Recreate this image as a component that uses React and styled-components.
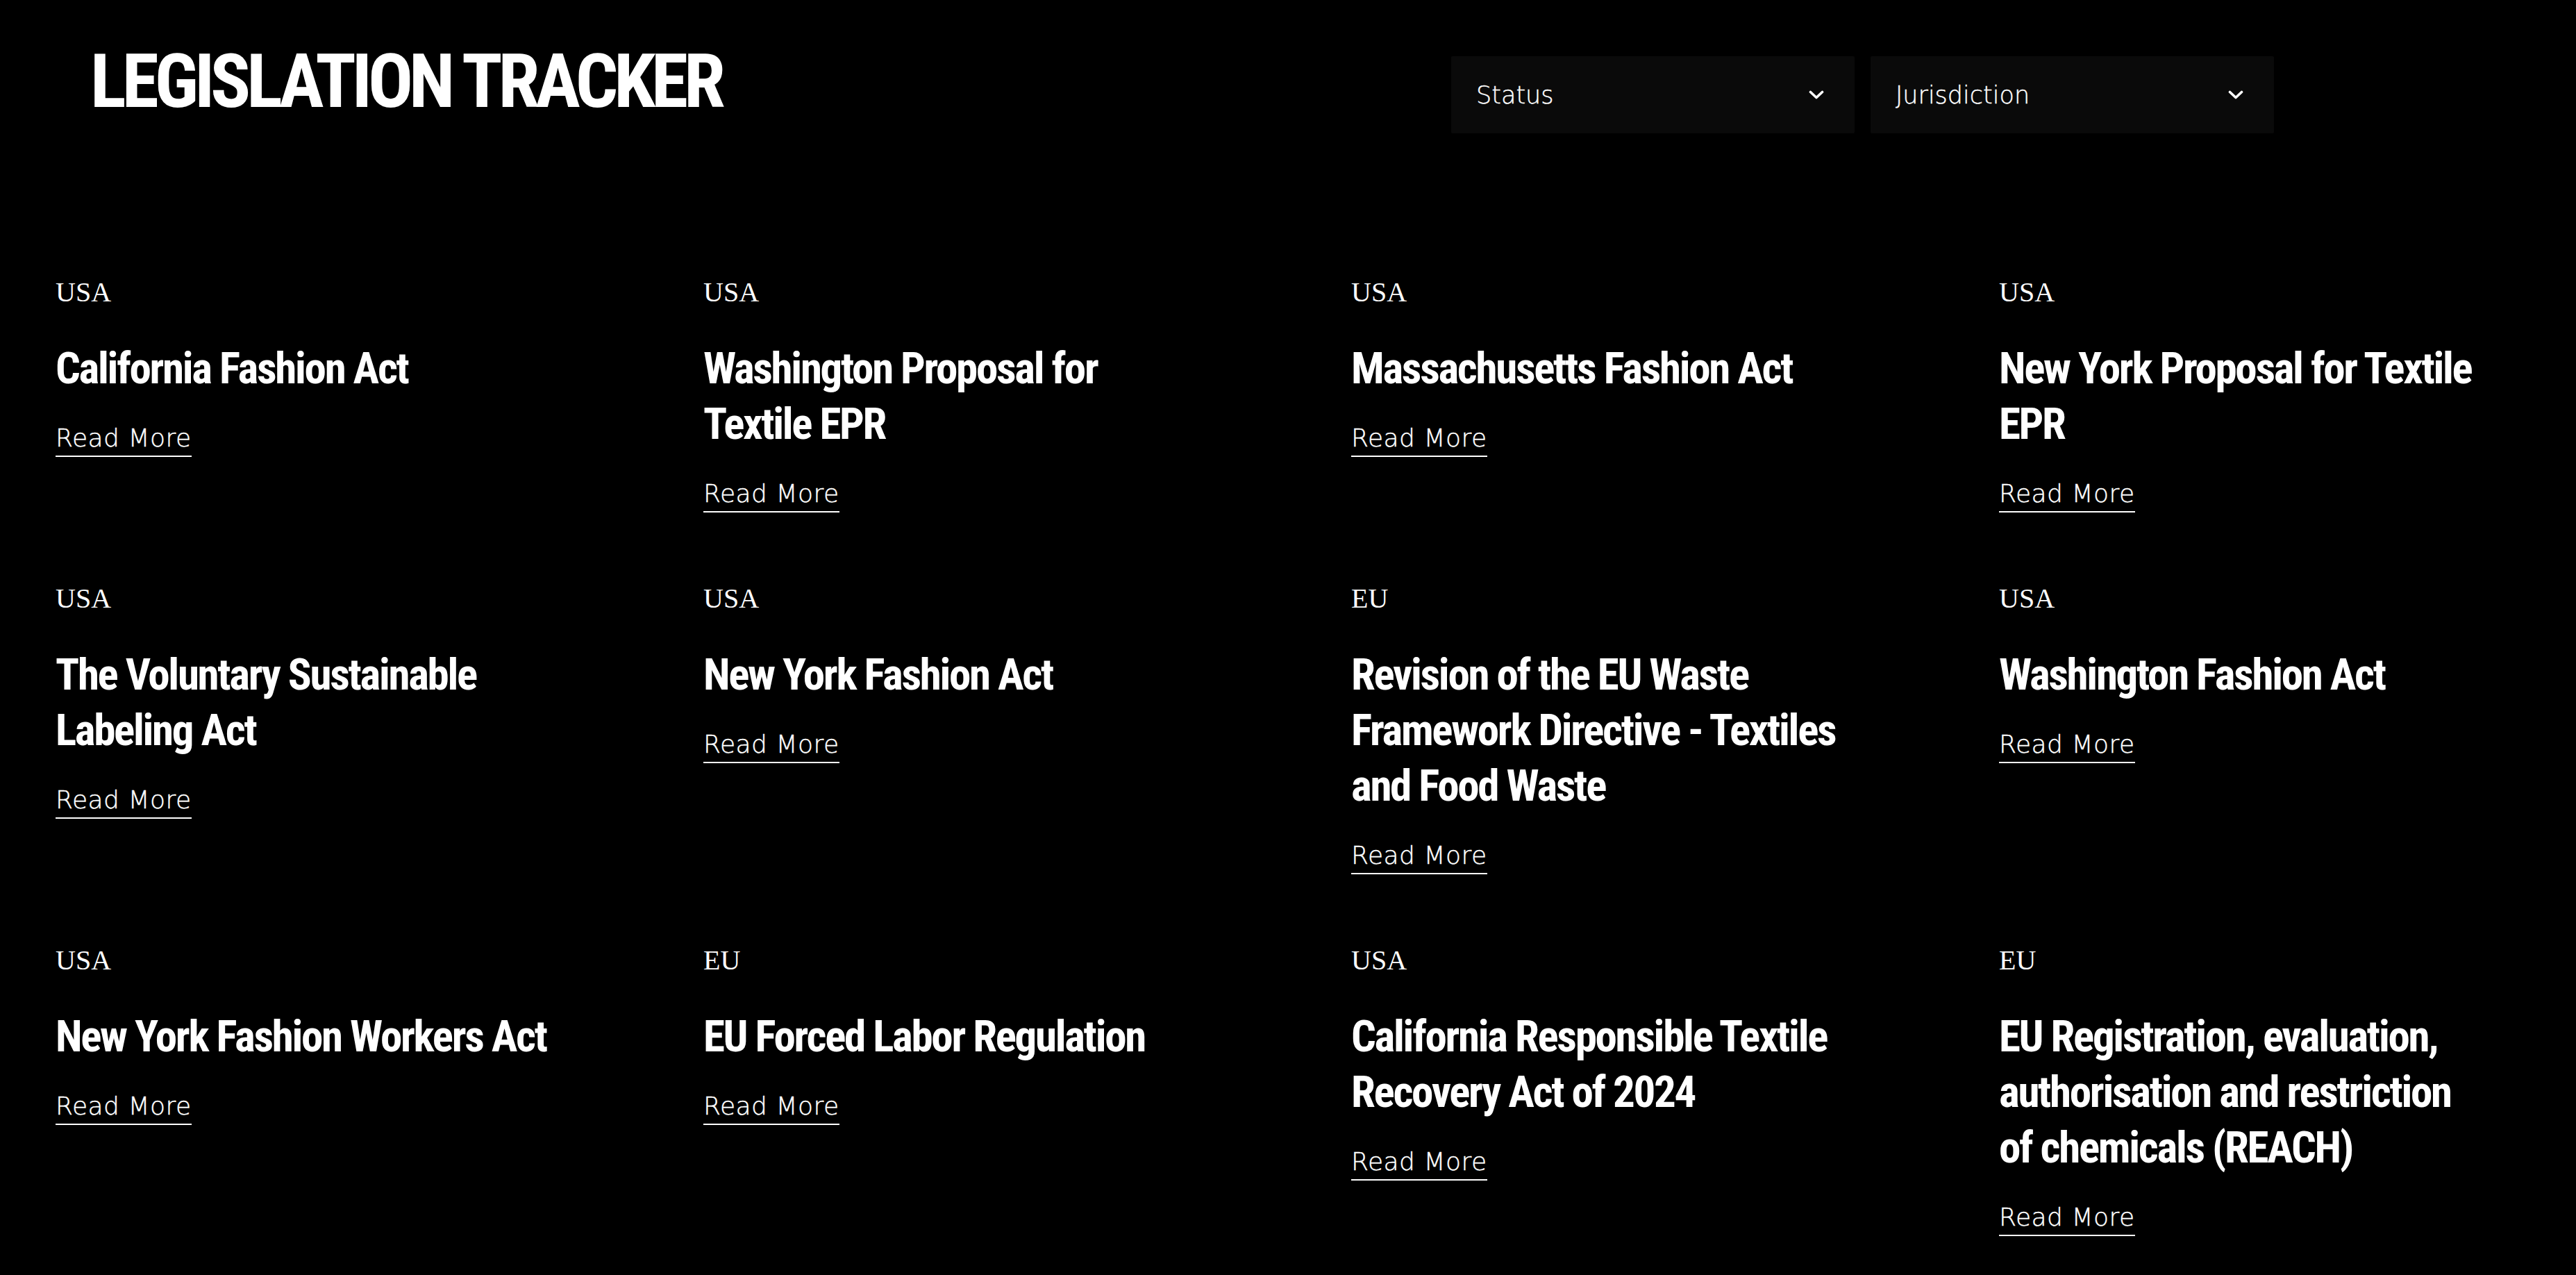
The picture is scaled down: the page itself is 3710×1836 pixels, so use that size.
import React from 'react'
import styled, { createGlobalStyle } from 'styled-components'

const GlobalStyle = createGlobalStyle`
  body {
    margin: 0;
    background: #000;
    color: #fff;
  }
`

const legislation = [
  { region: 'USA', title: 'California Fashion Act' },
  { region: 'USA', title: 'Washington Proposal for\nTextile EPR' },
  { region: 'USA', title: 'Massachusetts Fashion Act' },
  { region: 'USA', title: 'New York Proposal for Textile\nEPR' },
  { region: 'USA', title: 'The Voluntary Sustainable\nLabeling Act' },
  { region: 'USA', title: 'New York Fashion Act' },
  { region: 'EU', title: 'Revision of the EU Waste\nFramework Directive - Textiles\nand Food Waste' },
  { region: 'USA', title: 'Washington Fashion Act' },
  { region: 'USA', title: 'New York Fashion Workers Act' },
  { region: 'EU', title: 'EU Forced Labor Regulation' },
  { region: 'USA', title: 'California Responsible Textile\nRecovery Act of 2024' },
  { region: 'EU', title: 'EU Registration, evaluation,\nauthorisation and restriction\nof chemicals (REACH)' },
]

function Chevron() {
  return (
    <svg width="22" height="13" viewBox="0 0 22 13" fill="none">
      <polyline points="2.5,2.5 11,10.5 19.5,2.5" stroke="#fff" strokeWidth="3.6" strokeLinecap="round" strokeLinejoin="round" />
    </svg>
  )
}

function App() {
  return (
    <Page>
      <GlobalStyle />
      <Header>
        <Heading>LEGISLATION TRACKER</Heading>
        <Filters>
          <Select>
            <span>Status</span>
            <Chevron />
          </Select>
          <Select>
            <span>Jurisdiction</span>
            <Chevron />
          </Select>
        </Filters>
      </Header>

      <Grid>
        {legislation.map((item, index) => (
          <Card key={index}>
            <Region>{item.region}</Region>
            <Title>{item.title}</Title>
            <ReadMore href="#">Read More</ReadMore>
          </Card>
        ))}
      </Grid>
    </Page>
  )
}

export default App

const Page = styled.div`
    min-height: 100vh;
    background: #000;
    padding-bottom: 60px;
`;

const Header = styled.header`
    display: flex;
    align-items: flex-start;
    justify-content: space-between;
    padding: 63px 435px 0 130px;
`;

const Heading = styled.h1`
    margin: 0;
    font-family: "Roboto Condensed", "Liberation Sans Narrow", sans-serif;
    font-weight: 700;
    font-size: 108px;
    line-height: 1;
    letter-spacing: -6px;
    color: #fff;
`;

const Filters = styled.div`
    display: flex;
    gap: 23px;
    margin-top: 18px;
`;

const Select = styled.button`
    width: 581px;
    height: 111px;
    display: flex;
    align-items: center;
    justify-content: space-between;
    padding: 0 44px 0 36px;
    box-sizing: border-box;
    background: #0a0a0a;
    border: none;
    border-radius: 2px;
    color: #fff;
    font-family: "DejaVu Sans", sans-serif;
    font-weight: 200;
    font-size: 35px;
    line-height: 40px;
    -webkit-text-stroke: 0.4px #fff;
    cursor: pointer;

    svg {
        flex-shrink: 0;
    }
`;

const Grid = styled.section`
    display: grid;
    grid-template-columns: repeat(4, 1fr);
    column-gap: 182px;
    row-gap: 100px;
    align-items: start;
    padding: 205px 80px 0;
`;

const Card = styled.div`
    display: flex;
    flex-direction: column;
    align-items: flex-start;
`;

const Region = styled.span`
    font-family: "Liberation Serif", serif;
    font-size: 40px;
    line-height: 48px;
    color: #fff;
`;

const Title = styled.h3`
    margin: 46px 0 0;
    font-family: "Roboto Condensed", "Liberation Sans Narrow", sans-serif;
    font-weight: 700;
    font-size: 63px;
    line-height: 80px;
    letter-spacing: -2.3px;
    white-space: pre-line;
    color: #fff;
`;

const ReadMore = styled.a`
    margin-top: 40px;
    padding-bottom: 5px;
    border-bottom: 2px solid #fff;
    font-family: "DejaVu Sans", sans-serif;
    font-weight: 200;
    font-size: 36px;
    line-height: 40px;
    letter-spacing: 0.5px;
    -webkit-text-stroke: 0.4px #fff;
    color: #fff;
    text-decoration: none;
`;
